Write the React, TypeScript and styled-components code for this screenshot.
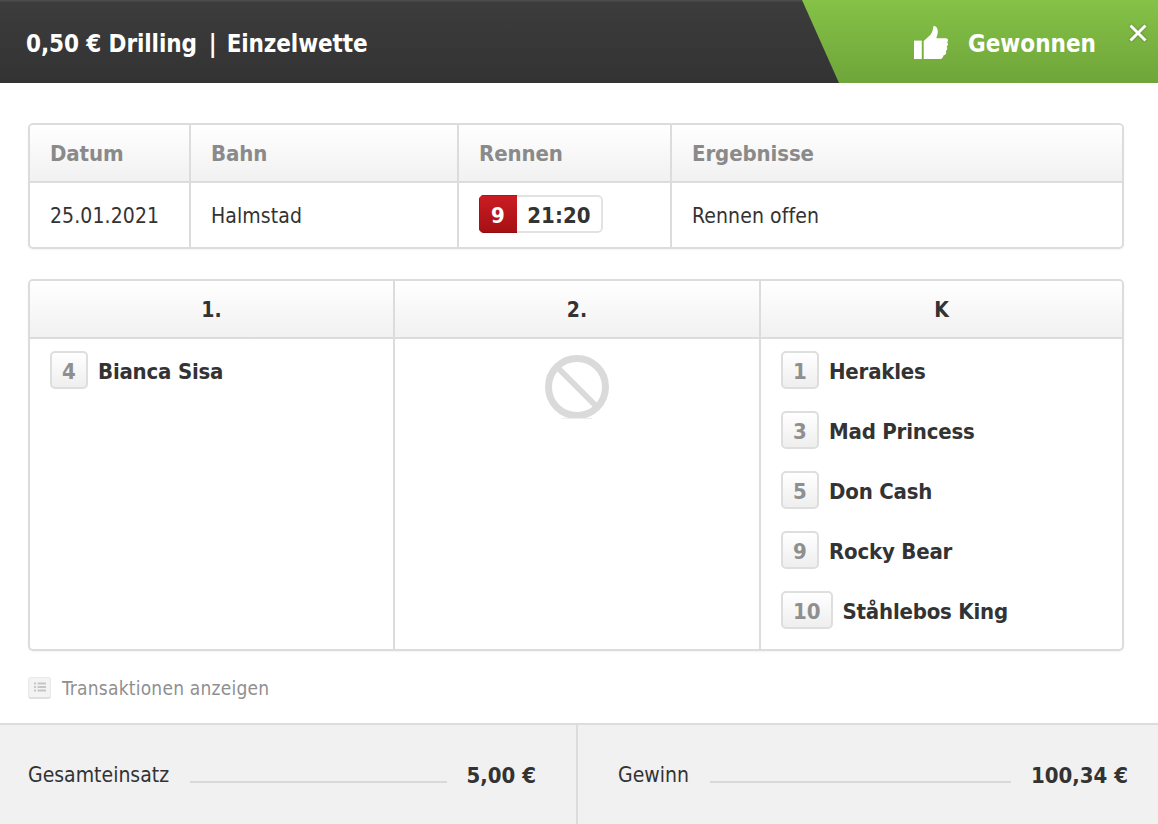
import React from "react";
import styled, { createGlobalStyle } from "styled-components";

const GlobalStyle = createGlobalStyle`
  html, body {
    margin: 0;
    padding: 0;
    background: #fff;
  }
  body {
    font-family: "DejaVu Sans Condensed", "DejaVu Sans", Verdana, sans-serif;
    font-stretch: condensed;
    color: #333;
  }
`;

const firstSelections = [{ number: "4", name: "Bianca Sisa" }];
const combiSelections = [
  { number: "1", name: "Herakles" },
  { number: "3", name: "Mad Princess" },
  { number: "5", name: "Don Cash" },
  { number: "9", name: "Rocky Bear" },
  { number: "10", name: "Ståhlebos King" },
];

const ThumbIcon = () => (
  <svg width="35" height="35" viewBox="0 0 36 36" aria-hidden="true">
    <rect x="0" y="15" width="8" height="19" fill="#fff" />
    <path
      d="M10 15.500 L17 9 C19 6.500 19.500 3.500 20 0 C23 -0.500 24.500 3 24.500 6 C24.500 8.500 23.500 10.500 23 12.500 L33 12.500 C35.500 12.500 35.500 16 33.800 16.800 C35.500 17.800 35.200 20.500 33.400 21.200 C34.800 22.400 34.400 25 32.600 25.600 C33.800 27 33 30 30.500 30 C30 31.500 29 34 27 34 L10 34 Z"
      fill="#fff"
    />
  </svg>
);

const CloseIcon = () => (
  <svg width="20" height="20" viewBox="0 0 20 20" aria-hidden="true">
    <path d="M2.500 2.500 L17.500 17.500 M17.500 2.500 L2.500 17.500" stroke="#fff" strokeWidth="3" />
  </svg>
);

const BlockedIcon = () => (
  <svg width="66" height="66" viewBox="0 0 66 66" aria-hidden="true">
    <circle cx="33" cy="33" r="28.500" fill="none" stroke="#dadada" strokeWidth="7" />
    <path d="M14 14 L52 52" stroke="#dadada" strokeWidth="6" />
    <path d="M18 64.500 H48" stroke="#ececec" strokeWidth="1" />
  </svg>
);

const ListIcon = () => (
  <svg width="14" height="12" viewBox="0 0 14 12" aria-hidden="true">
    <path
      d="M1 1.500h2v2H1zM1 5h2v2H1zM1 8.500h2v2H1zM4.500 1.500h8.500v2H4.500zM4.500 5h8.500v2H4.500zM4.500 8.500h8.500v2H4.500z"
      fill="#c6c6c6"
    />
  </svg>
);

const App = () => {
  return (
    <>
      <GlobalStyle />
      <Page>
        <Header>
          <Title>
            0,50 € Drilling<TitleDivider>|</TitleDivider>Einzelwette
          </Title>
          <Status>
            <ThumbIcon />
            <StatusText>Gewonnen</StatusText>
            <CloseButton>
              <CloseIcon />
            </CloseButton>
          </Status>
        </Header>

        <Content>
          <InfoTable>
            <InfoHead>Datum</InfoHead>
            <InfoHead>Bahn</InfoHead>
            <InfoHead>Rennen</InfoHead>
            <InfoHead $last>Ergebnisse</InfoHead>
            <InfoCell>25.01.2021</InfoCell>
            <InfoCell>Halmstad</InfoCell>
            <InfoCell>
              <RaceTag>
                <RaceNumber>9</RaceNumber>
                <RaceTime>21:20</RaceTime>
              </RaceTag>
            </InfoCell>
            <InfoCell $last>Rennen offen</InfoCell>
          </InfoTable>

          <BetTable>
            <BetHead>1.</BetHead>
            <BetHead>2.</BetHead>
            <BetHead $last>K</BetHead>
            <BetColumn>
              {firstSelections.map((s) => (
                <Runner key={s.number}>
                  <RunnerNumber>{s.number}</RunnerNumber>
                  <RunnerName>{s.name}</RunnerName>
                </Runner>
              ))}
            </BetColumn>
            <BetColumn $center>
              <BlockedIcon />
            </BetColumn>
            <BetColumn $last>
              {combiSelections.map((s) => (
                <Runner key={s.number}>
                  <RunnerNumber>{s.number}</RunnerNumber>
                  <RunnerName>{s.name}</RunnerName>
                </Runner>
              ))}
            </BetColumn>
          </BetTable>

          <TransactionLink>
            <ListBadge>
              <ListIcon />
            </ListBadge>
            Transaktionen anzeigen
          </TransactionLink>
        </Content>

        <Footer>
          <Summary>
            <SummaryLabel>Gesamteinsatz</SummaryLabel>
            <SummaryLine />
            <SummaryValue>5,00 €</SummaryValue>
          </Summary>
          <Summary $right>
            <SummaryLabel>Gewinn</SummaryLabel>
            <SummaryLine />
            <SummaryValue>100,34 €</SummaryValue>
          </Summary>
        </Footer>
      </Page>
    </>
  );
};

export default App;

const Page = styled.div`
  width: 1158px;
  height: 824px;
  display: flex;
  flex-direction: column;
  overflow: hidden;
  background: #fff;
`;

const Header = styled.header`
  height: 83px;
  flex: none;
  display: flex;
  justify-content: space-between;
  background: linear-gradient(#4c4c4c 0, #4c4c4c 1px, #3c3c3c 2px, #333333 100%);
`;

const Title = styled.h1`
  margin: 0;
  padding: 4px 0 0 26px;
  align-self: center;
  font-size: 24px;
  font-weight: 700;
  letter-spacing: -0.1px;
  color: #fff;
  white-space: nowrap;
`;

const TitleDivider = styled.span`
  margin: 0 10px 0 12px;
`;

const Status = styled.div`
  position: relative;
  width: 356px;
  display: flex;
  align-items: center;
  padding: 4px 0 0 112px;
  box-sizing: border-box;
  background: linear-gradient(#85c247, #6fa53a);
  clip-path: polygon(0 0, 100% 0, 100% 100%, 37px 100%);
`;

const StatusText = styled.span`
  margin-left: 19px;
  font-size: 24px;
  font-weight: 700;
  color: #fff;
`;

const CloseButton = styled.div`
  position: absolute;
  top: 23px;
  right: 10px;
  width: 20px;
  height: 20px;
  filter: drop-shadow(0 0 1px rgba(0, 0, 0, 0.35));
`;

const Content = styled.main`
  flex: 1;
  display: flex;
  flex-direction: column;
  padding: 40px 34px 0 28px;
`;

const InfoTable = styled.section`
  display: grid;
  grid-template-columns: 161px 268px 213px 1fr;
  grid-template-rows: 58px 64px;
  border: 2px solid #dcdcdc;
  border-radius: 5px;
  box-shadow: 0 1px 2px rgba(0, 0, 0, 0.05);
  overflow: hidden;
`;

const InfoHead = styled.div<{ $last?: boolean }>`
  display: flex;
  align-items: center;
  padding-left: 20px;
  font-size: 22px;
  font-weight: 700;
  letter-spacing: -0.1px;
  color: #8a8a8a;
  background: linear-gradient(#fff, #f1f1f1);
  border-bottom: 2px solid #dcdcdc;
  border-right: ${(p) => (p.$last ? "none" : "2px solid #dcdcdc")};
`;

const InfoCell = styled.div<{ $last?: boolean }>`
  display: flex;
  align-items: center;
  padding: 1px 0 0 20px;
  font-size: 21px;
  letter-spacing: 0.1px;
  color: #333;
  border-right: ${(p) => (p.$last ? "none" : "2px solid #dcdcdc")};
`;

const RaceTag = styled.div`
  display: flex;
  height: 38px;
  margin-top: -3px;
  border-radius: 5px;
  overflow: hidden;
`;

const RaceNumber = styled.span`
  width: 38px;
  padding-top: 2px;
  box-sizing: border-box;
  display: flex;
  align-items: center;
  justify-content: center;
  font-size: 22px;
  font-weight: 700;
  color: #fff;
  background: linear-gradient(#cb1c22, #a51014);
  box-shadow: inset 0 1px 0 #a8171b, inset 1px 0 0 #a01317, inset 0 -1px 0 #8f0c10;
`;

const RaceTime = styled.span`
  width: 86px;
  padding-top: 2px;
  box-sizing: border-box;
  display: flex;
  align-items: center;
  justify-content: center;
  font-size: 22px;
  font-weight: 700;
  color: #333;
  border: 2px solid #e2e2e2;
  border-left: none;
  border-radius: 0 5px 5px 0;
`;

const BetTable = styled.section`
  margin-top: 30px;
  height: 372px;
  box-sizing: border-box;
  display: grid;
  grid-template-columns: 365px 366px 1fr;
  grid-template-rows: 58px 1fr;
  border: 2px solid #dcdcdc;
  border-radius: 5px;
  box-shadow: 0 1px 2px rgba(0, 0, 0, 0.05);
  overflow: hidden;
`;

const BetHead = styled.div<{ $last?: boolean }>`
  display: flex;
  align-items: center;
  justify-content: center;
  padding-top: 2px;
  font-size: 21px;
  font-weight: 700;
  color: #333;
  background: linear-gradient(#fff, #f1f1f1);
  border-bottom: 2px solid #dcdcdc;
  border-right: ${(p) => (p.$last ? "none" : "2px solid #dcdcdc")};
`;

const BetColumn = styled.div<{ $center?: boolean; $last?: boolean }>`
  display: flex;
  flex-direction: column;
  align-items: ${(p) => (p.$center ? "center" : "flex-start")};
  gap: 22px;
  padding: ${(p) => (p.$center ? "15px 0 0" : "12px 20px 0")};
  border-right: ${(p) => (p.$last ? "none" : "2px solid #dcdcdc")};
`;

const Runner = styled.div`
  display: flex;
  align-items: center;
  height: 38px;
`;

const RunnerNumber = styled.span`
  min-width: 38px;
  height: 38px;
  padding: 2px 10px 0;
  box-sizing: border-box;
  display: flex;
  align-items: center;
  justify-content: center;
  font-size: 22px;
  font-weight: 700;
  color: #8f8f8f;
  background: linear-gradient(#fff, #eeeeee);
  border: 2px solid #dedede;
  border-radius: 5px;
`;

const RunnerName = styled.span`
  margin-left: 10px;
  padding-top: 2px;
  font-size: 22px;
  font-weight: 700;
  letter-spacing: -0.2px;
  color: #333;
  white-space: nowrap;
`;

const TransactionLink = styled.div`
  margin-top: 26px;
  display: flex;
  align-items: center;
  gap: 11px;
  font-size: 19px;
  letter-spacing: 0.22px;
  color: #8f8f8f;
`;

const ListBadge = styled.span`
  width: 23px;
  height: 22px;
  margin-top: -1px;
  box-sizing: border-box;
  display: flex;
  align-items: center;
  justify-content: center;
  background: #f3f3f3;
  border: 1px solid #e8e8e8;
  border-bottom: 2px solid #dedede;
  border-radius: 3px;
`;

const Footer = styled.footer`
  height: 101px;
  flex: none;
  box-sizing: border-box;
  display: grid;
  grid-template-columns: 578px 1fr;
  background: #f1f1f1;
  border-top: 2px solid #dcdcdc;
`;

const Summary = styled.div<{ $right?: boolean }>`
  display: flex;
  align-items: center;
  padding: ${(p) => (p.$right ? "0 30px 0 40px" : "0 40px 0 28px")};
  border-right: ${(p) => (p.$right ? "none" : "2px solid #dcdcdc")};
`;

const SummaryLabel = styled.span`
  font-size: 21px;
  color: #333;
`;

const SummaryLine = styled.span`
  flex: 1;
  height: 2px;
  margin: 14px 20px 0 21px;
  background: #d9d9d9;
`;

const SummaryValue = styled.span`
  padding-top: 1px;
  font-size: 22px;
  font-weight: 700;
  color: #333;
  white-space: nowrap;
`;
